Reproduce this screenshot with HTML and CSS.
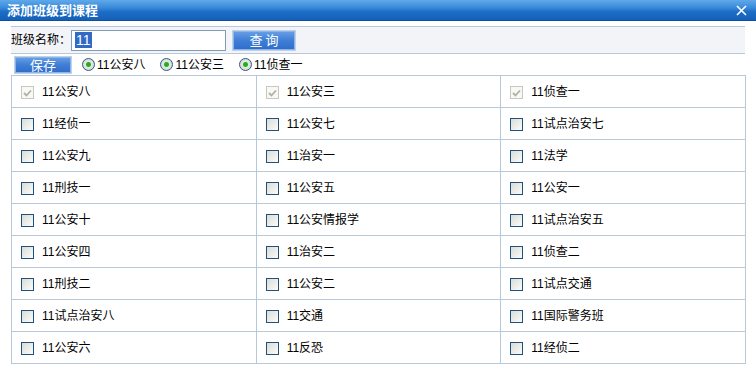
FILE: index.html
```html
<!DOCTYPE html>
<html lang="zh">
<head>
<meta charset="utf-8">
<title>添加班级到课程</title>
<link rel="stylesheet" href="styles.css">
</head>
<body>
<div class="dialog">
  <div class="titlebar">
    <span class="title">添加班级到课程</span>
    <svg class="close" width="11" height="11" viewBox="0 0 11 11"><path d="M1 1 L10 10 M10 1 L1 10" stroke="#fff" stroke-width="1.6"/></svg>
  </div>
  <div class="content">
    <div class="search">
      <span class="label">班级名称：</span>
      <div class="input"><span class="sel">11</span></div>
      <button class="btn query">查 询</button>
    </div>
    <div class="actions">
      <button class="btn save">保存</button>
      <label class="radio"><span class="rdot"></span>11公安八</label>
      <label class="radio"><span class="rdot"></span>11公安三</label>
      <label class="radio"><span class="rdot"></span>11侦查一</label>
    </div>
    <table class="grid">
      <tr>
        <td><span class="cb checked"><svg width="9" height="8" viewBox="0 0 9 8"><path d="M1 4 L3.5 6.5 L8 1.5" fill="none" stroke="#b0b0a8" stroke-width="1.8"/></svg></span>11公安八</td>
        <td><span class="cb checked"><svg width="9" height="8" viewBox="0 0 9 8"><path d="M1 4 L3.5 6.5 L8 1.5" fill="none" stroke="#b0b0a8" stroke-width="1.8"/></svg></span>11公安三</td>
        <td><span class="cb checked"><svg width="9" height="8" viewBox="0 0 9 8"><path d="M1 4 L3.5 6.5 L8 1.5" fill="none" stroke="#b0b0a8" stroke-width="1.8"/></svg></span>11侦查一</td>
      </tr>
      <tr><td><span class="cb"></span>11经侦一</td><td><span class="cb"></span>11公安七</td><td><span class="cb"></span>11试点治安七</td></tr>
      <tr><td><span class="cb"></span>11公安九</td><td><span class="cb"></span>11治安一</td><td><span class="cb"></span>11法学</td></tr>
      <tr><td><span class="cb"></span>11刑技一</td><td><span class="cb"></span>11公安五</td><td><span class="cb"></span>11公安一</td></tr>
      <tr><td><span class="cb"></span>11公安十</td><td><span class="cb"></span>11公安情报学</td><td><span class="cb"></span>11试点治安五</td></tr>
      <tr><td><span class="cb"></span>11公安四</td><td><span class="cb"></span>11治安二</td><td><span class="cb"></span>11侦查二</td></tr>
      <tr><td><span class="cb"></span>11刑技二</td><td><span class="cb"></span>11公安二</td><td><span class="cb"></span>11试点交通</td></tr>
      <tr><td><span class="cb"></span>11试点治安八</td><td><span class="cb"></span>11交通</td><td><span class="cb"></span>11国际警务班</td></tr>
      <tr><td><span class="cb"></span>11公安六</td><td><span class="cb"></span>11反恐</td><td><span class="cb"></span>11经侦二</td></tr>
    </table>
  </div>
</div>
</body>
</html>
```
FILE: styles.css
```css
* { box-sizing: border-box; }
html, body { margin: 0; padding: 0; background: #fff; }
body {
  font-family: "Liberation Sans", "Noto Sans CJK SC", sans-serif;
  font-size: 12px;
  color: #000;
  width: 756px;
  height: 379px;
  overflow: hidden;
}
.titlebar {
  height: 21px;
  background: linear-gradient(#5fa9ea 0%, #3d8ddc 35%, #1c6cc6 60%, #1560b8 100%);
  border-bottom: 1px solid #0e4f9e;
  display: flex;
  align-items: center;
  justify-content: space-between;
  padding: 0 9px 0 7px;
}
.title {
  color: #fff;
  font-weight: bold;
  font-size: 13px;
  font-family: "Noto Sans CJK SC", sans-serif;
  line-height: 20px;
}
.content { padding: 5px 11px 0 11px; }
.search {
  height: 28px;
  background: #f3f4f8;
  border-top: 1px solid #b8c8d8;
  border-bottom: 1px solid #b8c8d8;
  display: flex;
  align-items: center;
}
.label { width: 60px; line-height: 14px; }
.input {
  width: 155px;
  height: 21px;
  border: 1px solid #7f9db9;
  background: #fff;
  display: flex;
  align-items: center;
  padding-left: 3px;
}
.sel {
  background: #316ac5;
  color: #fff;
  font-size: 14px;
  line-height: 16px;
  padding: 0 1px;
}
.btn {
  font-family: "Noto Sans CJK SC", sans-serif;
  font-size: 13px;
  color: #fff;
  background: linear-gradient(#6aa0e6, #3f7ed6 50%, #2f6cc8);
  border: 1px solid #c2d2e6;
  box-shadow: inset 0 0 0 1px #8ab4ec;
  padding: 0;
  line-height: 16px;
}
.query { width: 64px; height: 21px; margin-left: 6px; }
.actions {
  height: 21px;
  display: flex;
  align-items: center;
}
.save { width: 58px; height: 18px; margin-left: 3px; margin-right: 10px; }
.radio {
  display: flex;
  align-items: center;
  margin-right: 15px;
  line-height: 14px;
}
.rdot {
  width: 13px;
  height: 13px;
  border-radius: 50%;
  border: 1px solid #2c5a8a;
  background: radial-gradient(circle, #22b022 0, #22b022 2px, #e8e8e2 3px, #d8d8d0 6px);
  margin-right: 2px;
}
.grid {
  border-collapse: collapse;
  width: 735px;
  table-layout: fixed;
}
.grid td {
  border: 1px solid #b8c8d8;
  height: 32px;
  padding: 0 0 0 9px;
  vertical-align: middle;
  white-space: nowrap;
  line-height: 14px;
}
.grid tr { height: 32px; }
.cb {
  display: inline-block;
  vertical-align: -3px;
  width: 13px;
  height: 13px;
  border: 1px solid #1c5180;
  background: linear-gradient(135deg, #dcdcd6, #fbfbf9);
  margin-right: 8px;
  position: relative;
}
.cb.checked {
  border-color: #c8c8c0;
  background: #f8f8f4;
}
.cb svg { position: absolute; left: 1px; top: 2px; }
```
